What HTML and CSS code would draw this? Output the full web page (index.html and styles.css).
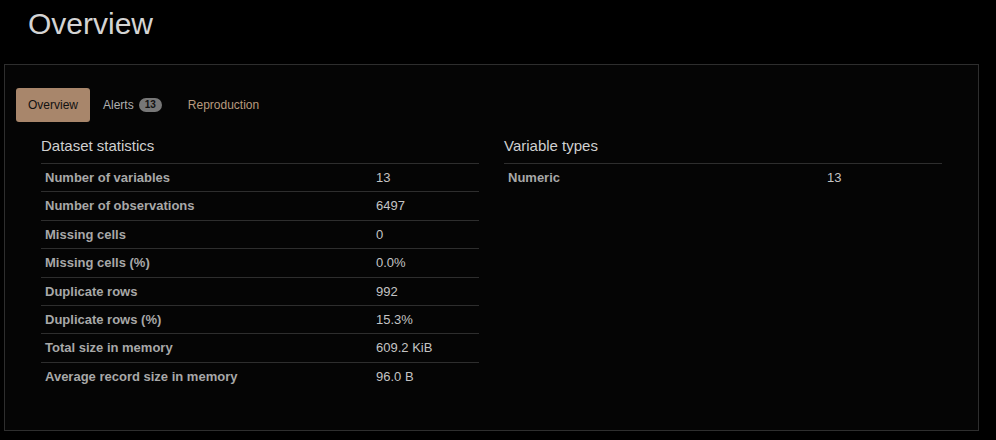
FILE: index.html
```html
<!DOCTYPE html>
<html>
<head>
    <meta charset="UTF-8">
    <meta name="viewport" content="width=device-width, initial-scale=1.0">
    <title>Overview</title>
    <link rel="stylesheet" href="styles.css">
</head>
<body>
    <h1 class="page-title">Overview</h1>
    <div class="panel">
        <ul class="tabs">
            <li class="tab active">Overview</li>
            <li class="tab">Alerts <span class="badge">13</span></li>
            <li class="tab link">Reproduction</li>
        </ul>
        <div class="columns">
            <div class="col">
                <p class="section-title">Dataset statistics</p>
                <table class="stats">
                    <tr><th>Number of variables</th><td>13</td></tr>
                    <tr><th>Number of observations</th><td>6497</td></tr>
                    <tr><th>Missing cells</th><td>0</td></tr>
                    <tr><th>Missing cells (%)</th><td>0.0%</td></tr>
                    <tr><th>Duplicate rows</th><td>992</td></tr>
                    <tr><th>Duplicate rows (%)</th><td>15.3%</td></tr>
                    <tr><th>Total size in memory</th><td>609.2 KiB</td></tr>
                    <tr><th>Average record size in memory</th><td>96.0 B</td></tr>
                </table>
            </div>
            <div class="col">
                <p class="section-title">Variable types</p>
                <table class="stats types">
                    <tr><th>Numeric</th><td>13</td></tr>
                </table>
            </div>
        </div>
    </div>
</body>
</html>
```

FILE: styles.css
```css
body {
    margin: 0;
    background: #000;
    font-family: "Liberation Sans", Arial, sans-serif;
    color: #c8c8c8;
}

.page-title {
    margin: 7px 0 24px 28px;
    font-size: 30px;
    font-weight: normal;
    line-height: 33px;
    color: #d4d4d4;
}

.panel {
    margin-left: 4px;
    width: 973px;
    height: 365px;
    border: 1px solid #2e2e2e;
    background: #050505;
    box-sizing: content-box;
}

.tabs {
    list-style: none;
    margin: 23px 0 0 11px;
    padding: 0;
    display: flex;
}

.tab {
    height: 34px;
    padding: 0 13px;
    font-size: 12px;
    line-height: 34px;
    color: #b0b0b0;
    border-radius: 3px;
    display: flex;
    align-items: center;
    gap: 5px;
}

.tab.active {
    padding: 0 12px;
    background: #a8866b;
    color: #111;
}

.tab.link {
    color: #b89a7e;
}

.badge {
    display: inline-block;
    min-width: 11px;
    padding: 0 6px;
    height: 14px;
    line-height: 14px;
    border-radius: 7px;
    background: #777;
    color: #111;
    font-size: 10px;
    font-weight: bold;
    text-align: center;
}

.columns {
    display: grid;
    grid-template-columns: 438px 438px;
    gap: 25px;
    margin: 14px 0 0 36px;
}

.section-title {
    margin: 0;
    padding-bottom: 7px;
    font-size: 15px;
    line-height: 20px;
    color: #d0d0d0;
}

.stats {
    width: 100%;
    border-collapse: collapse;
    font-size: 13px;
}

.stats th,
.stats td {
    border-top: 1px solid #2e2e2e;
    padding: 5px 4px;
    line-height: 17.4px;
    text-align: left;
}

.stats th {
    width: 323px;
    color: #a8a8a8;
    font-weight: bold;
}

.stats td {
    color: #c4c4c4;
}

.types th {
    width: 311px;
}
```
